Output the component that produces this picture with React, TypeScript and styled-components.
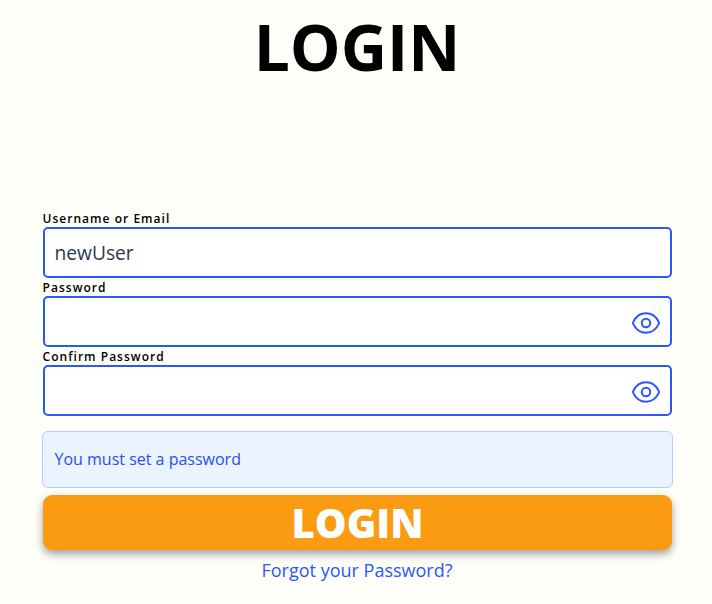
import React, { useState } from "react";
import styled, { createGlobalStyle } from "styled-components";

const GlobalStyle = createGlobalStyle`
  * { box-sizing: border-box; }
  body {
    margin: 0;
    background: #fffffa;
    font-family: "Open Sans", sans-serif;
    color: #000;
  }
`;

const Page = styled.main`
  display: flex;
  flex-direction: column;
  height: 604px;
  padding: 0 40px 0 42px;
  overflow: hidden;
`;

const Title = styled.h1`
  margin: 3px 0 0;
  height: 207px;
  font-size: 64px;
  font-weight: 700;
  line-height: 87px;
  text-align: center;
`;

const Form = styled.form`
  display: flex;
  flex-direction: column;
`;

const Field = styled.div`
  display: flex;
  flex-direction: column;
  height: 69px;
  margin: 0 0 0 1px;
`;

const Label = styled.label`
  height: 17px;
  margin-left: -0.5px;
  font-size: 12px;
  font-weight: 600;
  line-height: 17px;
  letter-spacing: 1.03px;
`;

const InputBox = styled.div`
  display: flex;
  align-items: center;
  width: 629px;
  height: 51px;
  padding: 0 9px 0 9.5px;
  background: #fff;
  border: 2px solid #2857fc;
  border-radius: 5px;
`;

const Input = styled.input`
  flex: 1;
  min-width: 0;
  padding: 0;
  border: 0;
  outline: 0;
  background: transparent;
  color: #2b3750;
  font: 400 19.2px/28px "Open Sans", sans-serif;
`;

const EyeButton = styled.button`
  display: flex;
  padding: 2px 0 0;
  border: 0;
  background: none;
  color: #2857fc;
  cursor: pointer;
`;

const Notice = styled.div`
  width: 631px;
  height: 57px;
  margin-top: 14px;
  padding: 0 11.5px;
  background: #ebf3ff;
  border: 1px solid #b0d0fb;
  border-radius: 6px;
  color: #2450ee;
  font-size: 16px;
  line-height: 55px;
`;

const Submit = styled.button`
  width: 629px;
  height: 55px;
  margin: 7px 0 0 1px;
  padding: 0;
  border: 0;
  border-radius: 9px;
  background: #fb9b12;
  box-shadow: 0 4px 8px rgba(0, 0, 0, 0.38);
  color: #fff;
  font: 800 40px/55px "Open Sans", sans-serif;
`;

const Forgot = styled.a`
  margin: 7px auto 0;
  color: #2857fc;
  font-size: 18px;
  line-height: 27px;
  text-decoration: none;
`;

function Eye() {
  return (
    <svg width="30" height="24" viewBox="0 0 30 24" fill="none" stroke="currentColor" strokeWidth="2" strokeLinejoin="round">
      <path d="M2.200 11.100C5 5.200 9.500 2.200 15 2.200S25 5.200 27.800 11.100Q28.250 12 27.800 12.900C25 18.800 20.500 21.800 15 21.800S5 18.800 2.200 12.900Q1.750 12 2.200 11.100z" />
      <circle cx="15" cy="12" r="4.200" />
    </svg>
  );
}

function TextField({ id, label, initial = "", secret = false }: { id: string; label: string; initial?: string; secret?: boolean }) {
  const [value, setValue] = useState(initial);
  const [visible, setVisible] = useState(false);
  return (
    <Field>
      <Label htmlFor={id}>{label}</Label>
      <InputBox>
        <Input id={id} type={secret && !visible ? "password" : "text"} value={value} onChange={(e) => setValue(e.target.value)} />
        {secret && (
          <EyeButton type="button" aria-label="Show password" onClick={() => setVisible(!visible)}>
            <Eye />
          </EyeButton>
        )}
      </InputBox>
    </Field>
  );
}

export default function App() {
  return (
    <Page>
      <GlobalStyle />
      <Title>LOGIN</Title>
      <Form onSubmit={(e) => e.preventDefault()}>
        <TextField id="user" label="Username or Email" initial="newUser" />
        <TextField id="password" label="Password" secret />
        <TextField id="confirm" label="Confirm Password" secret />
        <Notice>You must set a password</Notice>
        <Submit>LOGIN</Submit>
        <Forgot href="#">Forgot your Password?</Forgot>
      </Form>
    </Page>
  );
}
